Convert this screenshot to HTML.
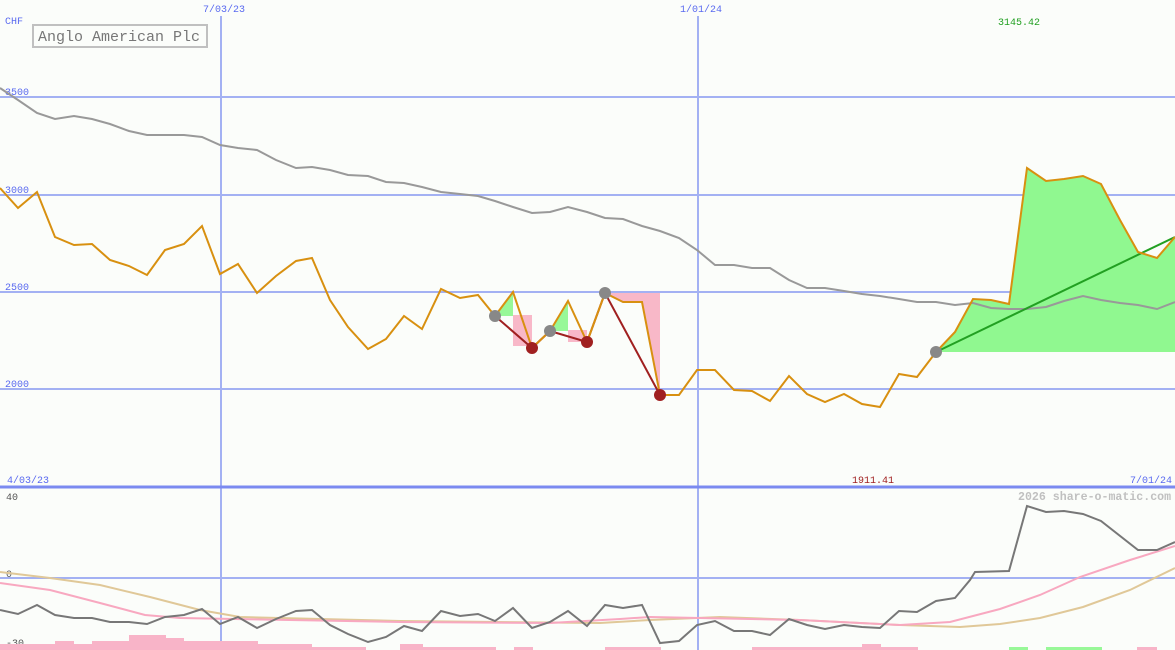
<!DOCTYPE html>
<html><head><meta charset="utf-8"><style>
html,body{margin:0;padding:0;background:#fbfdfa;}
svg{display:block}
text{font-family:"Liberation Mono","DejaVu Sans Mono",monospace;font-size:10px}
</style></head><body>
<svg width="1175" height="650" viewBox="0 0 1175 650" xmlns="http://www.w3.org/2000/svg">
<rect width="1175" height="650" fill="#fbfdfa"/>
<g stroke="#a3b1f3" stroke-width="2">
<line x1="0" y1="97" x2="1175" y2="97"/>
<line x1="0" y1="195" x2="1175" y2="195"/>
<line x1="0" y1="292" x2="1175" y2="292"/>
<line x1="0" y1="389" x2="1175" y2="389"/>
<line x1="0" y1="578" x2="1175" y2="578"/>
<line x1="221" y1="16" x2="221" y2="650"/>
<line x1="698" y1="16" x2="698" y2="650"/>
</g>
<line x1="0" y1="487" x2="1175" y2="487" stroke="#7b8af0" stroke-width="3"/>
<g fill="#5a6af0">
<text x="5" y="24">CHF</text>
<text x="203" y="12">7/03/23</text>
<text x="680" y="12">1/01/24</text>
<text x="5" y="95">3500</text>
<text x="5" y="193">3000</text>
<text x="5" y="290">2500</text>
<text x="5" y="387">2000</text>
<text x="7" y="483">4/03/23</text>
<text x="1130" y="483">7/01/24</text>
</g>
<text x="998" y="25" fill="#22a022">3145.42</text>
<text x="852" y="483" fill="#a02020">1911.41</text>
<text x="1018" y="500" fill="#c0c0c0" font-weight="bold" style="font-size:11.6px">2026 share-o-matic.com</text>
<text x="6" y="500" fill="#555">40</text>
<text x="6" y="577" fill="#555">0</text>
<text x="6" y="646" fill="#555">-30</text>
<rect x="33" y="25" width="174" height="22" fill="#fbfdfa" stroke="#c0c0c0" stroke-width="2"/>
<text x="38" y="41" fill="#777" style="font-size:15px">Anglo American Plc</text>
<polygon fill="#90f890" points="936,352 955,332 973,299 991,300 1009,304 1027,168 1046,181 1064,179 1083,176 1101,184 1120,220 1138,252 1157,258 1175,237 1175,352"/>
<polygon fill="#98f898" points="495,316 513,292 513,316"/>
<rect x="513" y="315" width="19" height="31" fill="#f8b8c8"/>
<polygon fill="#98f898" points="550,331 568,301 568,331"/>
<rect x="568" y="330" width="19" height="12" fill="#f8b8c8"/>
<polygon fill="#f8b8c8" points="605,293 660,293 660,395 642,302 623,302"/>
<polyline fill="none" stroke="#999" stroke-width="2" points="0,88 18,100 37,113 55,119 74,116 92,119 110,124 129,131 147,135 165,135 184,135 202,137 220,145 238,148 257,150 276,160 296,168 312,167 330,170 348,175 368,176 386,182 404,183 422,187 441,192 460,194 478,196 495,201 513,207 532,213 550,212 568,207 587,212 605,218 623,219 642,226 660,231 679,238 697,250 715,265 734,265 752,268 770,268 789,280 807,288 825,288 844,291 862,294 880,296 899,299 917,302 936,302 955,305 973,303 991,308 1009,309 1027,309 1046,307 1064,301 1083,296 1101,300 1120,303 1138,305 1157,309 1175,302"/>
<polyline fill="none" stroke="#a02020" stroke-width="2" points="495,316 532,348 550,331 587,342 605,293 660,395"/>
<line x1="936" y1="352" x2="1175" y2="237" stroke="#22a022" stroke-width="2"/>
<polyline fill="none" stroke="#d89010" stroke-width="2" points="0,188 18,208 37,192 55,237 74,245 92,244 110,260 129,266 147,275 165,250 184,244 202,226 220,274 238,264 257,293 276,276 296,261 312,258 330,300 348,327 368,349 386,339 404,316 422,329 441,289 460,298 478,295 495,316 513,292 532,348 550,331 568,301 587,342 605,293 623,302 642,302 660,395 679,395 697,370 715,370 734,390 752,391 770,401 789,376 807,394 825,402 844,394 862,404 880,407 899,374 917,377 936,352 955,332 973,299 991,300 1009,304 1027,168 1046,181 1064,179 1083,176 1101,184 1120,220 1138,252 1157,258 1175,237"/>
<g fill="#888"><circle cx="495" cy="316" r="6"/><circle cx="550" cy="331" r="6"/><circle cx="605" cy="293" r="6"/><circle cx="936" cy="352" r="6"/></g>
<g fill="#a02020"><circle cx="532" cy="348" r="6"/><circle cx="587" cy="342" r="6"/><circle cx="660" cy="395" r="6"/></g>
<g fill="#f8b4c8">
<rect x="0" y="644" width="55" height="6"/><rect x="55" y="641" width="19" height="9"/><rect x="74" y="644" width="18" height="6"/><rect x="92" y="641" width="37" height="9"/><rect x="129" y="635" width="37" height="15"/><rect x="166" y="638" width="18" height="12"/><rect x="184" y="641" width="74" height="9"/><rect x="258" y="644" width="54" height="6"/><rect x="312" y="647" width="54" height="3"/><rect x="400" y="644" width="23" height="6"/><rect x="423" y="647" width="73" height="3"/><rect x="514" y="647" width="19" height="3"/><rect x="605" y="647" width="56" height="3"/><rect x="752" y="647" width="113" height="3"/><rect x="862" y="644" width="19" height="6"/><rect x="881" y="647" width="37" height="3"/><rect x="1137" y="647" width="20" height="3"/></g>
<g fill="#98f898"><rect x="1009" y="647" width="19" height="3"/><rect x="1046" y="647" width="56" height="3"/></g>
<polyline fill="none" stroke="#e0c898" stroke-width="2" points="0,572 50,578 100,585 150,597 200,610 240,617 400,621 600,623 650,620 720,617 800,620 900,625 960,627 1000,624 1040,618 1083,607 1130,590 1175,568"/>
<polyline fill="none" stroke="#f8a8c0" stroke-width="2" points="0,583 50,590 100,603 145,615 180,618 400,622 550,623 620,619 650,617 700,618 800,620 900,625 950,622 1000,609 1040,595 1080,577 1130,560 1175,546"/>
<polyline fill="none" stroke="#777" stroke-width="2" points="0,610 18,614 37,605 55,615 74,618 92,618 110,622 129,622 147,624 165,617 184,615 202,609 220,624 238,617 257,628 276,619 296,611 312,610 330,625 348,634 368,642 386,637 404,626 422,631 441,611 460,616 478,614 495,621 513,608 532,628 550,622 568,611 587,626 605,605 623,608 642,605 660,643 679,641 697,625 715,621 734,631 752,631 770,635 789,619 807,625 825,629 844,625 862,627 880,628 899,611 917,612 936,601 955,598 970,580 975,572 1009,571 1027,506 1046,512 1064,511 1083,514 1101,521 1138,550 1157,550 1175,542"/>
</svg>
</body></html>
